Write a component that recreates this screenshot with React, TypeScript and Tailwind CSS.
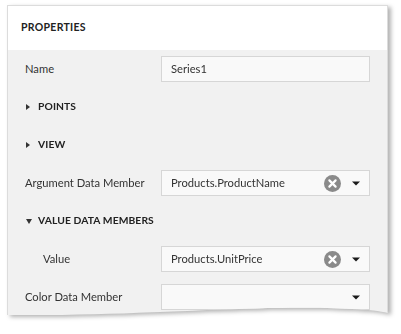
import React from "react";

const font = "font-['Segoe_UI','Lato',sans-serif]";

function ClearIcon() {
  return (
    <svg width="17" height="17" viewBox="0 0 17 17" className="shrink-0">
      <circle cx="8.5" cy="8.5" r="8.5" fill="#8a8a8a" />
      <path d="M5.4 5.4 11.6 11.6M11.6 5.4 5.4 11.6" stroke="#fff" strokeWidth="2.2" strokeLinecap="round" />
    </svg>
  );
}

function Caret() {
  return (
    <svg width="8" height="5" viewBox="0 0 8 5" className="shrink-0">
      <path d="M0 0.5H8L4 4.5Z" fill="#1a1a1a" />
    </svg>
  );
}

function Field({ value, clear, caret = true }: { value?: string; clear?: boolean; caret?: boolean }) {
  return (
    <div className="ml-auto mr-[17px] flex h-[26px] w-[209px] items-center border border-[#d6d6d6] bg-[#f9f9f9] pl-[9px] pr-[9px] text-[11.2px] text-[#333]">
      <span className="flex-1 truncate">{value}</span>
      {clear && (
        <div className="mr-[11px]">
          <ClearIcon />
        </div>
      )}
      {caret && <Caret />}
    </div>
  );
}

function Row({
  label,
  value,
  clear,
  indent,
  caret,
}: {
  label: string;
  value?: string;
  clear?: boolean;
  indent?: boolean;
  caret?: boolean;
}) {
  return (
    <div className="flex h-[38px] items-center">
      <span className={`${indent ? "pl-[35px]" : "pl-[17px]"} text-[11.2px] text-[#333]`}>{label}</span>
      <Field value={value} clear={clear} caret={caret} />
    </div>
  );
}

function Section({ title, open }: { title: string; open?: boolean }) {
  return (
    <div className="flex h-[38px] items-center pl-[18px]">
      <span className="flex w-[12px] items-center">
        {open ? (
          <svg width="6" height="5" viewBox="0 0 6 5">
            <path d="M0 0H6L3 5Z" fill="#333" />
          </svg>
        ) : (
          <svg width="4" height="6" viewBox="0 0 4 6">
            <path d="M0 0L4 3L0 6Z" fill="#333" />
          </svg>
        )}
      </span>
      <span className="text-[10.3px] font-bold tracking-[0.1px] text-[#222]">{title}</span>
    </div>
  );
}

export default function App() {
  return (
    <div className={`h-[334px] w-[401px] bg-white pl-[7px] pt-[5px] ${font}`}>
      <div className="w-[381px] [filter:drop-shadow(3px_2px_2px_rgba(0,0,0,0.3))]">
        <div className="h-[310px] border-x border-t border-[#dcdcdc] bg-[#f1f1f1] [clip-path:path('M0,0_H381_V308_C360,303_300,302_250,303.5_C180,305_100,311_0,310_Z')]">
          <div className="flex h-[44px] items-center bg-white pl-[13px] text-[10.5px] font-bold tracking-[0.3px] text-[#222]">
            PROPERTIES
          </div>
          <Row label="Name" value="Series1" caret={false} />
          <Section title="POINTS" />
          <Section title="VIEW" />
          <Row label="Argument Data Member" value="Products.ProductName" clear />
          <Section title="VALUE DATA MEMBERS" open />
          <Row label="Value" value="Products.UnitPrice" clear indent />
          <Row label="Color Data Member" />
        </div>
      </div>
    </div>
  );
}
